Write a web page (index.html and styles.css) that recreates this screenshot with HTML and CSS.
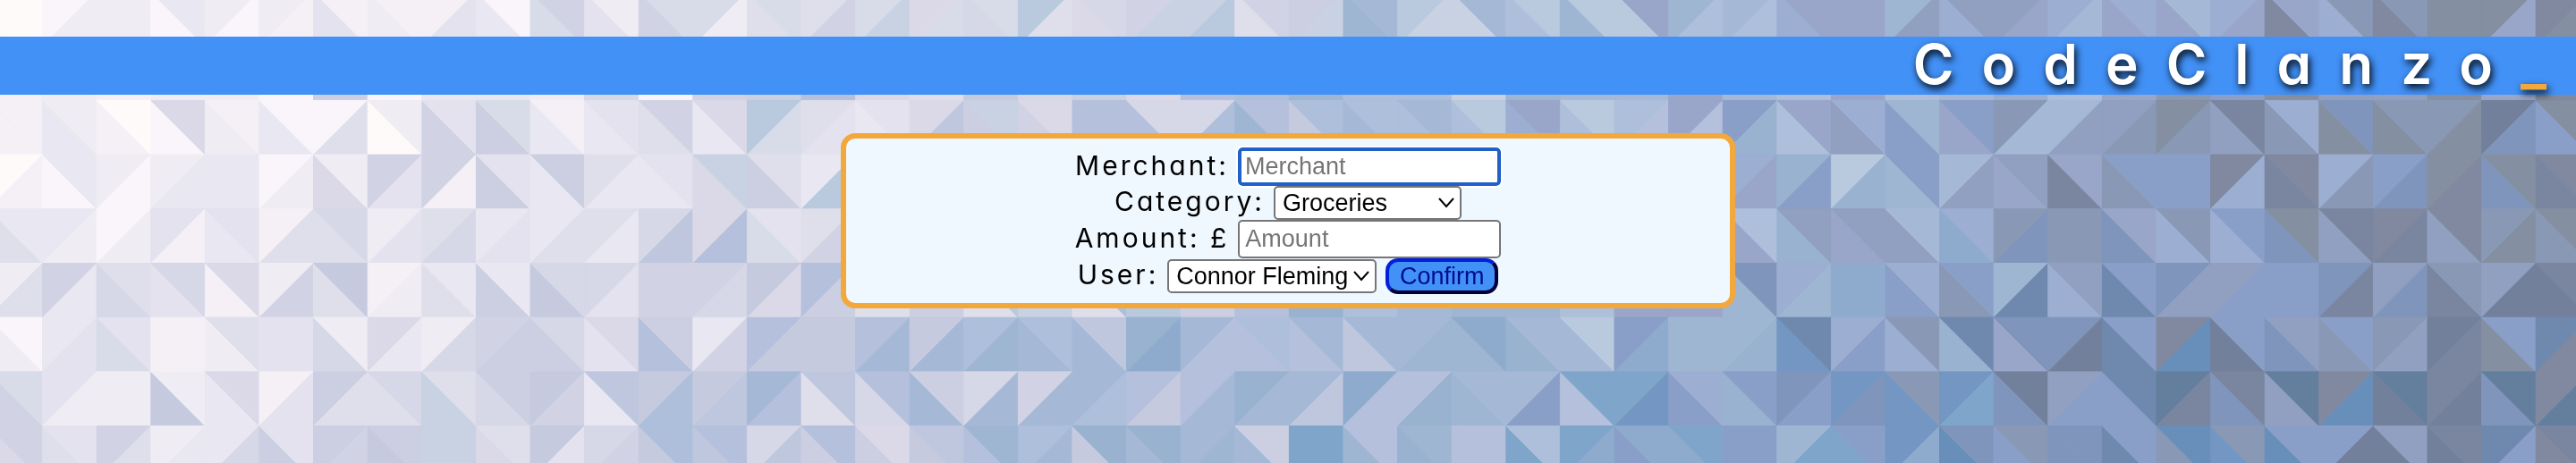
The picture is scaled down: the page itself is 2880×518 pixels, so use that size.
FILE: index.html
```html
<!DOCTYPE html>
<html lang="en">
<head>
<meta charset="utf-8">
<title>CodeClanzo</title>
<link rel="stylesheet" href="styles.css">
</head>
<body>
<svg class="backdrop" id="backdrop" aria-hidden="true"></svg>
<header class="banner">
  <h1 class="brand">CodeClanzo<span class="cursor">_</span></h1>
</header>
<main>
  <form class="panel">
    <div class="row">
      <label for="merchant">Merchant:</label>
      <input class="field" type="text" id="merchant" placeholder="Merchant" autofocus>
    </div>
    <div class="row">
      <label for="category">Category:</label>
      <select class="choice category" id="category"><option>Groceries</option></select>
    </div>
    <div class="row">
      <label for="amount">Amount: £</label>
      <input class="field" type="text" id="amount" placeholder="Amount">
    </div>
    <div class="row">
      <label for="user">User:</label>
      <select class="choice user" id="user"><option>Connor Fleming</option></select>
      <button class="confirm" type="submit">Confirm</button>
    </div>
  </form>
</main>
<script src="backdrop.js"></script>
</body>
</html>
```
FILE: styles.css
```css
* { box-sizing: border-box; }

body {
  margin: 0;
  min-height: 100vh;
  background: #c6cadf;
  font-family: Inter, "Open Sans", sans-serif;
  font-feature-settings: "cv11", "ss03";
  overflow-x: hidden;
  display: flow-root;
}

.backdrop {
  position: fixed;
  inset: 0;
  width: 100%;
  height: 100%;
  z-index: -1;
}

.banner {
  margin-top: 41px;
  padding: 0 2px 4px 0;
  background: #4291f7;
}

.brand {
  margin: 0;
  color: #fff;
  font-size: 62px;
  font-weight: 600;
  line-height: 61px;
  letter-spacing: 31px;
  text-align: right;
  text-shadow: 2px 4px 8px #000;
}

.cursor { color: #f3a83b; }

.panel {
  width: 1000px;
  max-width: 100%;
  margin: 43px auto 0;
  padding: 10px;
  border: 6px solid #f3a83b;
  border-radius: 16px;
  background: #f0f8ff;
}

.row {
  display: flex;
  justify-content: center;
  align-items: center;
  gap: 10px;
}

.row label {
  padding-bottom: 4px;
  color: #000;
  font-size: 30px;
  line-height: 34px;
  letter-spacing: 3px;
}

.field,
.choice,
.confirm {
  font-family: "Liberation Sans", Arial, sans-serif;
  font-size: 27px;
}

.field {
  width: 294px;
  height: 43px;
  padding: 2px 6px;
  border: 2px solid #767676;
  border-radius: 5px;
  background: #fff;
}

.field::placeholder { color: #757575; }

.field:focus {
  border: 4px solid #2060c8;
  padding: 0 4px;
  outline: 2px solid #fff;
}

.choice {
  appearance: none;
  height: 38px;
  padding: 0 8px;
  border: 2px solid #767676;
  border-radius: 5px;
  color: #000;
  background: #fff url("data:image/svg+xml,%3Csvg xmlns='http://www.w3.org/2000/svg' width='18' height='12'%3E%3Cpath d='M1 1l8 9 8-9' fill='none' stroke='black' stroke-width='2'/%3E%3C/svg%3E") no-repeat right 6px center;
}

.category { width: 210px; }
.user { width: 234px; }

.confirm {
  width: 126px;
  height: 40px;
  padding: 0;
  border: 4px solid;
  border-color: #0020dc #000038 #000038 #0020dc;
  border-radius: 14px;
  background: #4291f7;
  color: #000c90;
}
```
FILE: backdrop.js
```js
// Low-poly backdrop: each cell is two triangles.
// Token = left colour, right colour, diagonal ("/" or "b" for backslash).
const palette = {
  a: '#fffafa', b: '#f9f5fa', c: '#f4f0f6', d: '#efedf3', e: '#e9e7f1', f: '#e4e2ee',
  g: '#dfdfeb', h: '#dbd9e8', i: '#d6d7e7', j: '#d1d3e5', k: '#cccfe2', l: '#c6cadf',
  m: '#bfc7df', n: '#b4c0dc', o: '#c8d2e2', p: '#b9c9de', q: '#adbfda', r: '#a5b9d7',
  s: '#9fb6d3', t: '#98b2d0', u: '#8eabce', v: '#80a5ca', w: '#99a6ca', x: '#8a9fc8',
  y: '#7f95bb', z: '#7397c2', A: '#9caed2', B: '#919fc0', C: '#8999b5', D: '#858fa2',
  E: '#8089a0', F: '#7a869f', G: '#73809c', H: '#6f89ae', I: '#647f9e', J: '#688eba',
  K: '#d8dce9'
};

const rows = [
  'aa/ bd/ dd/ beb db/ dc/ fcb dcb cf/ ebb Kjb fdb jKb Kd/ gKb gj/ Ko/ hK/ iKb pg/ hib jo/ op/ gjb ko/ srb po/ orb qpb spb pwb sq/ rq/ Awb ww/ sB/ ABb Bw/ Ar/ wAb wrb Aw/ Ewb ACb ECb DD/ Dw/ ED/',
  'cc/ dd/ cc/ dd/ dd/ bb/ kk/ bb/ ee/ ee/ dd/ ii/ bb/ jj/ oo/ nn/ hh/ gg/ ll/ ii/ oo/ hh/ nn/ qq/ ss/ qq/ qq/ oo/ ss/ rr/ rr/ ww/ rr/ qq/ ww/ qq/ rr/ AA/ qq/ ww/ CC/ xx/ DD/ BB/ BB/ DD/ ww/ EE/',
  'ccb edb cab bhb dcb ebb bg/ adb jfb kKb ecb efb gjb ehb pK/ gf/ efb hm/ kob jhb nn/ nib iq/ snb lqb rqb qrb qpb Awb qpb qn/ wn/ xt/ qwb BAb xsb wxb Cr/ rB/ BC/ DC/ BFb CAb Dyb DCb CD/ Gy/ xDb',
  'ac/ beb db/ de/ ee/ bd/ hdb jf/ jc/ kfb ekb ge/ efb hob kgb ep/ ep/ hm/ kob jhb nn/ nib iq/ snb lqb rqb qrb qpb Awb qpb qn/ wn/ Aw/ tx/ pt/ sxb rB/ wBb Fwb Cxb xx/ EA/ FEb AC/ xy/ DE/ yDb FEb',
  'geb ed/ bd/ fc/ efb cg/ gib df/ gi/ ef/ eg/ ge/ im/ hn/ Kfb gj/ gj/ hm/ kob jhb nn/ nib iq/ snb lqb rqb qrb qpb Awb qpb qn/ wn/ wqb tBb wBb Brb uAb Cy/ CC/ ywb ACb Axb yDb BFb EF/ BEb CD/ CDb',
  'dg/ je/ igb fib chb dj/ glb cd/ geb keb lib if/ jj/ ji/ lh/ nk/ gg/ kk/ gpb oo/ gqb pp/ kk/ nn/ tt/ qq/ rr/ ss/ ss/ qq/ ww/ ww/ syb As/ uu/ xAb Cxb sH/ ABb Hxb yB/ Bx/ xx/ yF/ By/ FCb BG/ GFb',
  'dbb ef/ Kfb cc/ dgb ff/ idb he/ di/ jk/ kib fhb nkb ej/ nl/ ll/ nr/ lr/ qs/ rqb rmb tu/ rn/ nqb nrb mrb rs/ sub trb rpb xu/ ss/ st/ zHb Ax/ ACb tHb wyb yG/ Hxb EJ/ Gxb yBb Cxb CB/ GF/ Dxb HE/',
  'jKb fd/ ddb ldb ehb cf/ kg/ gib ogb ikb lj/ emb lq/ lm/ rn/ gmb inb rkb ir/ jr/ rq/ nl/ nr/ tr/ rm/ un/ nt/ srb rx/ nvb vz/ xAb txb yx/ zy/ zCb zv/ yGb Bx/ xHb IF/ yFb BIb EJ/ GIb FG/ yIb EI/',
  'hjb gfb jg/ de/ ei/ kfb kj/ lkb oo/ hgb lf/ ij/ lqb mnb im/ knb khb lmb nsb qr/ ltb rtb rs/ rkb vv/ snb tsb nnb vqb vu/ xub uvb xx/ sv/ vxb zu/ Jyb xCb yyb Hxb CJb zCb Jxb xG/ GBb GFb Hx/ EFb'
];

const cellWidth = 60.6;
const cellHeight = 60.7;
const left = -13;
const top0 = -9;
const svg = document.getElementById('backdrop');

function triangle(points, key) {
  const shape = document.createElementNS('http://www.w3.org/2000/svg', 'polygon');
  shape.setAttribute('points', points.map(p => p.join(',')).join(' '));
  shape.setAttribute('fill', palette[key]);
  shape.setAttribute('stroke', palette[key]);
  svg.appendChild(shape);
}

rows.forEach((row, r) => {
  row.split(' ').forEach((cell, c) => {
    const x0 = left + c * cellWidth, x1 = x0 + cellWidth;
    const y0 = top0 + r * cellHeight, y1 = y0 + cellHeight;
    if (cell[2] === '/') {
      triangle([[x0, y0], [x1, y0], [x0, y1]], cell[0]);
      triangle([[x1, y0], [x1, y1], [x0, y1]], cell[1]);
    } else {
      triangle([[x0, y0], [x0, y1], [x1, y1]], cell[0]);
      triangle([[x0, y0], [x1, y0], [x1, y1]], cell[1]);
    }
  });
});
```
